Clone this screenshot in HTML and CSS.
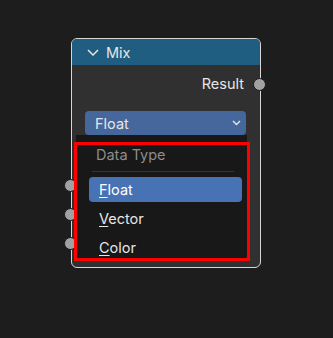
FILE: index.html
```html
<!DOCTYPE html>
<html lang="en">
<head>
    <meta charset="UTF-8">
    <meta name="viewport" content="width=device-width, initial-scale=1.0">
    <title>Mix Node</title>
    <link rel="stylesheet" href="styles.css">
</head>
<body>
    <div class="stage">
        <div class="node">
            <div class="header">
                <svg class="chev" width="12" height="7" viewBox="0 0 12 7"><path d="M1 1 L6 6 L11 1" fill="none" stroke="#e6e6e6" stroke-width="1.5"/></svg>
                <span>Mix</span>
            </div>
            <div class="output">Result</div>
            <span class="socket out"></span>
            <div class="select">
                <span>Float</span>
                <svg width="9" height="6" viewBox="0 0 9 6"><path d="M1 1 L4.5 4.5 L8 1" fill="none" stroke="#e6e6e6" stroke-width="1.4"/></svg>
            </div>
            <span class="socket in s1"></span>
            <span class="socket in s2"></span>
            <span class="socket in s3"></span>
        </div>

        <div class="menu">
            <div class="menu-title">Data Type</div>
            <div class="sep"></div>
            <div class="item active"><u>F</u>loat</div>
            <div class="item"><u>V</u>ector</div>
            <div class="item"><u>C</u>olor</div>
        </div>
        <div class="mark"></div>
    </div>
</body>
</html>
```

FILE: styles.css
```css
body {
    margin: 0;
    background: #1d1d1d;
    font-family: Inter, "Noto Sans", sans-serif;
    font-size: 14px;
    color: #e6e6e6;
}
.stage {
    position: relative;
    width: 333px;
    height: 338px;
    padding: 38px 0 0 71px;
    box-sizing: border-box;
}
.node {
    position: relative;
    width: 190px;
    height: 230px;
    box-sizing: border-box;
    border: 1px solid #d6d6d6;
    border-radius: 6px;
    background: #303030;
}
.header {
    height: 26px;
    background: #1f5e80;
    border-radius: 5px 5px 0 0;
    display: flex;
    align-items: center;
    padding-left: 15px;
    gap: 7px;
    font-size: 14.5px;
}
.output {
    text-align: right;
    padding-right: 16px;
    margin-top: 9px;
    line-height: 20px;
    font-size: 14.5px;
}
.socket {
    position: absolute;
    width: 11px;
    height: 11px;
    border-radius: 50%;
    background: #a1a1a1;
    border: 1px solid #1a1a1a;
}
.socket.out { left: 181px; top: 39px; }
.socket.in { left: -8px; }
.s1 { top: 140px; }
.s2 { top: 169px; }
.s3 { top: 198px; }
.select {
    margin: 17px 14px 0 13px;
    height: 24px;
    background: #46679c;
    border-radius: 4px;
    display: flex;
    align-items: center;
    justify-content: space-between;
    padding: 0 5px 0 10px;
    font-size: 14.5px;
}
.menu {
    position: absolute;
    left: 76px;
    top: 135px;
    width: 171px;
    height: 124px;
    background: #181818;
    border-radius: 0 0 4px 4px;
    padding: 8px 5px 0 13px;
    box-sizing: border-box;
}
.menu-title {
    color: #8c8c8c;
    line-height: 24px;
    padding-left: 7px;
    font-size: 14.5px;
}
.sep {
    height: 1px;
    background: #343434;
    margin: 4px 8px 5px 3px;
}
.menu .item {
    height: 25px;
    line-height: 25px;
    padding-left: 10px;
    margin-bottom: 4px;
    border-radius: 4px;
    font-size: 14.5px;
}
.menu .item.active {
    background: #4772b3;
    color: #fff;
}
.menu u {
    text-underline-offset: 2px;
}
.mark {
    position: absolute;
    left: 74px;
    top: 142px;
    width: 176px;
    height: 119px;
    box-sizing: border-box;
    border: 3px solid #ff0000;
}
```
